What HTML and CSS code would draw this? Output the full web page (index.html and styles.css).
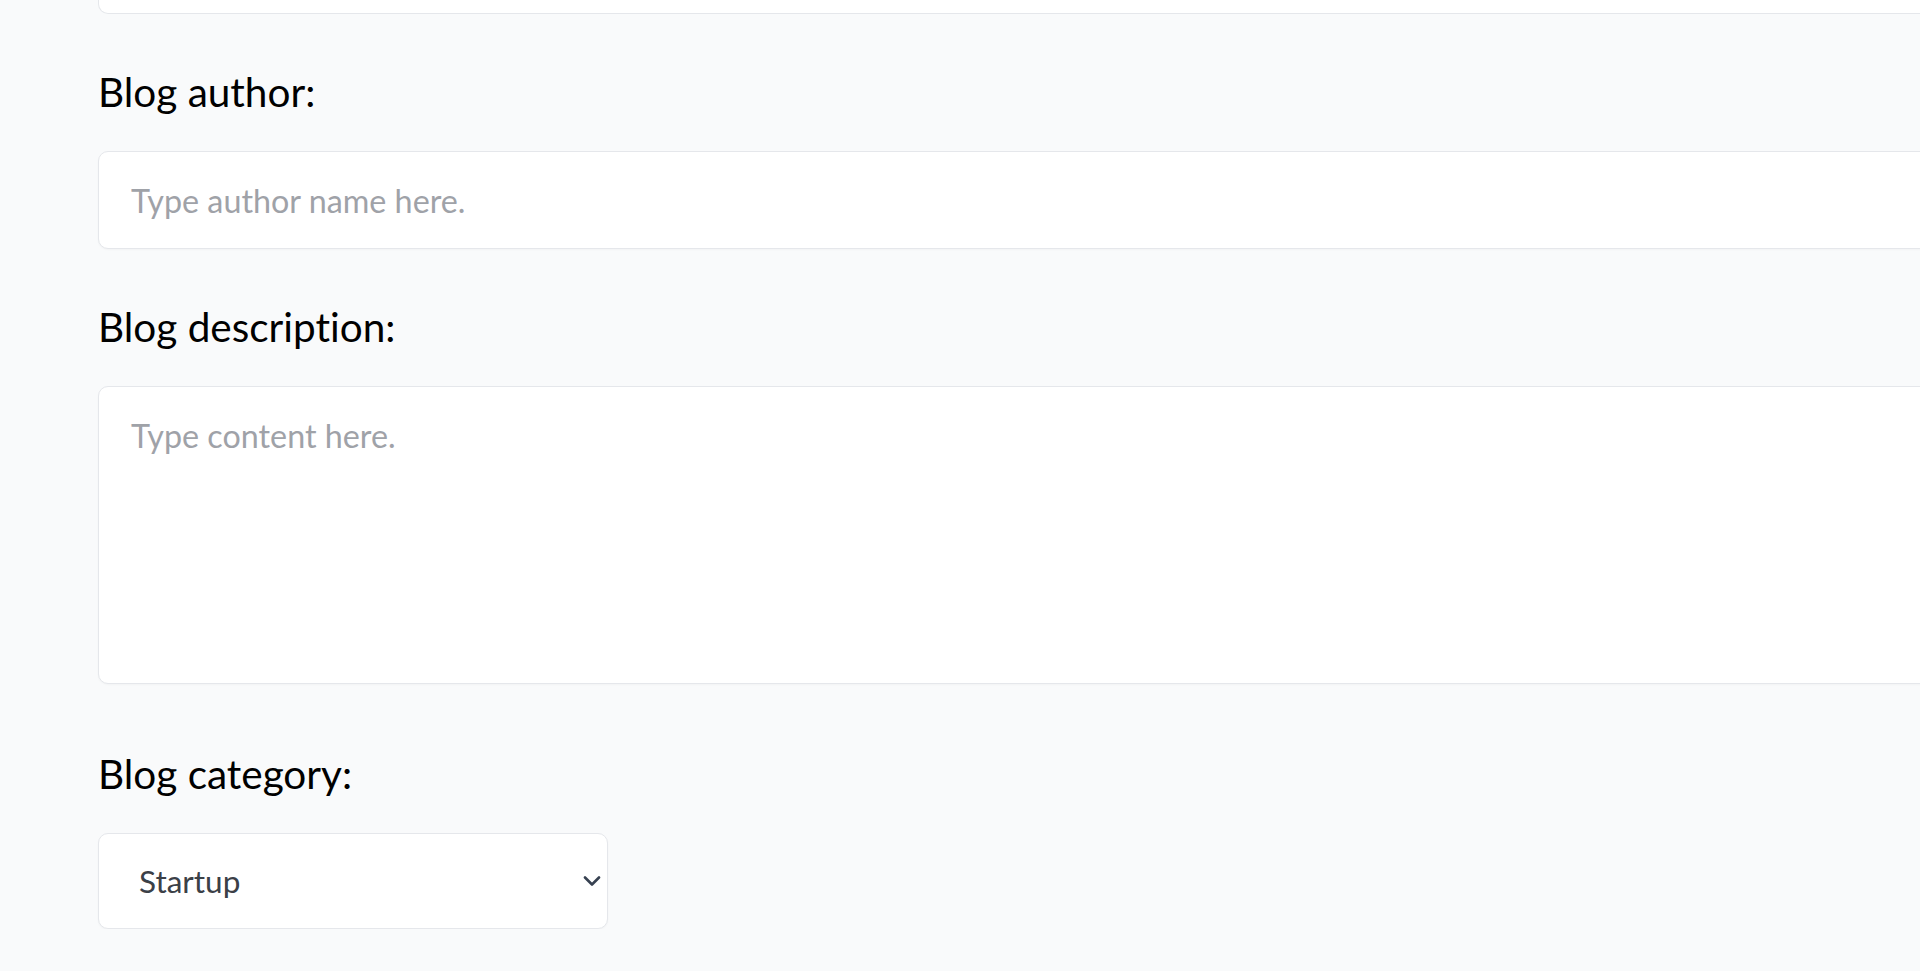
FILE: index.html
```html
<!DOCTYPE html>
<html lang="en">
<head>
<meta charset="utf-8">
<title>New blog</title>
<link rel="stylesheet" href="styles.css">
</head>
<body>
<form class="blog-form">
  <div class="input-tail"></div>

  <div class="field">
    <label class="field-label" for="author">Blog author:</label>
    <input class="text-input" id="author" type="text" placeholder="Type author name here.">
  </div>

  <div class="field">
    <label class="field-label" for="desc">Blog description:</label>
    <textarea class="text-area" id="desc" placeholder="Type content here."></textarea>
  </div>

  <div class="field field-select">
    <label class="field-label" for="cat">Blog category:</label>
    <div class="select-wrap">
      <select class="select" id="cat">
        <option>Startup</option>
        <option>Technology</option>
        <option>Lifestyle</option>
      </select>
      <svg class="chevron" width="18" height="10" viewBox="0 0 18 10" aria-hidden="true">
        <path d="M2 1.5 L9 8.5 L16 1.5" fill="none" stroke="#374151" stroke-width="2.6" stroke-linecap="round" stroke-linejoin="round"/>
      </svg>
    </div>
  </div>
</form>
</body>
</html>
```

FILE: styles.css
```css
html, body {
  margin: 0;
  padding: 0;
  overflow: hidden;
}

body {
  background: #f9fafb;
  font-family: "Lato", "Liberation Sans", sans-serif;
  font-variant-ligatures: none;
  color: #000;
}

.blog-form {
  display: flex;
  flex-direction: column;
  padding-left: 98px;
}

.input-tail {
  width: 1900px;
  height: 14px;
  background: #fff;
  border: 1px solid #e5e7eb;
  border-top: none;
  border-radius: 0 0 10px 10px;
  box-sizing: border-box;
}

.field {
  display: flex;
  flex-direction: column;
  align-items: flex-start;
  margin-top: 53px;
}

.field:first-of-type {
  margin-top: 52px;
}

.field-select {
  margin-top: 65px;
}

.field-label {
  font-size: 40.5px;
  line-height: 50px;
  margin-bottom: 34px;
  color: #000;
}

.text-input,
.text-area,
.select {
  font-family: "Lato", "Liberation Sans", sans-serif;
  font-variant-ligatures: none;
  background: #fff;
  border: 1px solid #e5e7eb;
  border-radius: 10px;
  box-sizing: border-box;
  box-shadow: 0 1px 2px rgba(0, 0, 0, 0.03);
  outline: none;
  margin: 0;
}

.text-input {
  width: 1900px;
  height: 98px;
  padding: 0 32px;
  font-size: 32.3px;
  color: #111827;
}

.text-area {
  display: block;
  width: 1900px;
  height: 298px;
  padding: 29px 32px;
  font-size: 32.3px;
  line-height: normal;
  resize: none;
  color: #111827;
}

.text-input::placeholder,
.text-area::placeholder {
  color: #9fa2a8;
  opacity: 1;
}

.select-wrap {
  position: relative;
  width: 510px;
}

.select {
  -webkit-appearance: none;
  appearance: none;
  width: 510px;
  height: 96px;
  padding: 0 60px 0 40px;
  font-size: 31.5px;
  color: #3b4047;
}

.chevron {
  position: absolute;
  right: 7px;
  top: 43px;
  pointer-events: none;
}
```
